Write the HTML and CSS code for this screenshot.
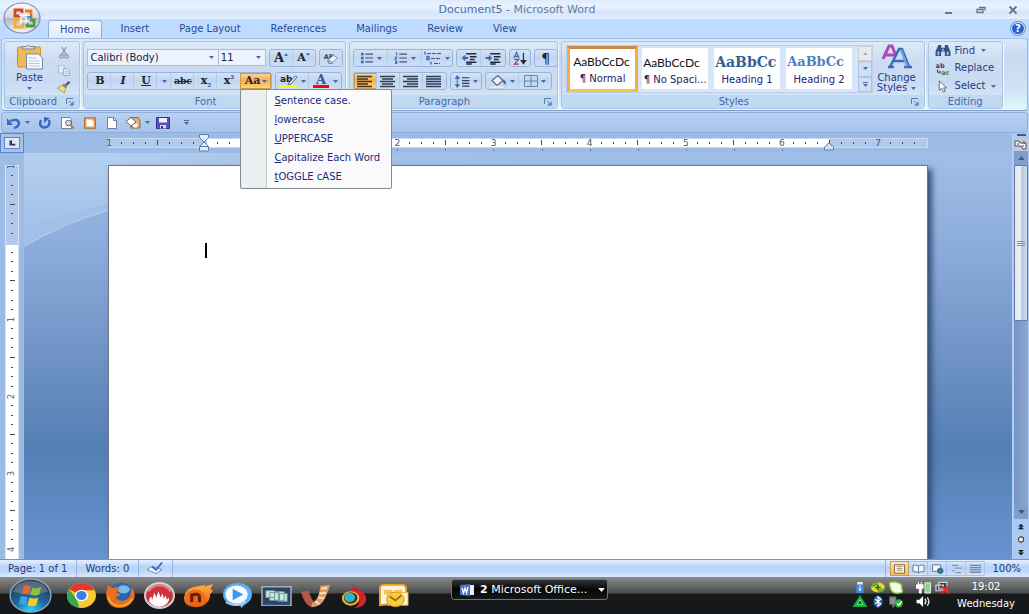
FILE: index.html
```html
<!DOCTYPE html>
<html lang="en">
<head>
<meta charset="utf-8">
<title>Document5 - Microsoft Word</title>
<link rel="stylesheet" href="styles.css">
</head>
<body>
<svg class="defs" aria-hidden="true">
  <defs>
    <radialGradient id="orb" cx=".5" cy=".95" r=".8"><stop offset="0" stop-color="#2fd6ff"/><stop offset=".5" stop-color="#1b6a9c"/><stop offset="1" stop-color="#2b3f55"/></radialGradient>
    <linearGradient id="silver" x1="0" y1="0" x2="0" y2="1"><stop offset="0" stop-color="#fdfdfe"/><stop offset=".48" stop-color="#d5d8e0"/><stop offset=".52" stop-color="#b4b9c8"/><stop offset="1" stop-color="#f4f5f9"/></linearGradient>
    <linearGradient id="swoosh" x1="0" y1="0" x2="0" y2="1"><stop offset="0" stop-color="#b4d0ef"/><stop offset="1" stop-color="#a3c1e8"/></linearGradient>
    <linearGradient id="fade" x1="0" y1="0" x2="1" y2="0"><stop offset="0" stop-color="#b3cfef"/><stop offset="1" stop-color="#a0bfe8" stop-opacity="0"/></linearGradient>
    <linearGradient id="fire" x1="0" y1="0" x2="0" y2="1"><stop offset="0" stop-color="#ffb347"/><stop offset="1" stop-color="#e2560c"/></linearGradient>
    <symbol id="caret" viewBox="0 0 5 3"><path d="M0 0h5L2.500 3z" fill="currentColor"/></symbol>
    <symbol id="launch" viewBox="0 0 8 8"><path d="M.5 6V.5H7M3 3l3.500 3.500M7 3.500V7H3.500" fill="none" stroke="#5b7fb4"/><path d="M7.500 4v3.500H4z" fill="#5b7fb4"/></symbol>
  </defs>
</svg>

<header class="titlebar">
  <button class="office" aria-label="Office Button">
    <svg viewBox="0 0 38 32"><ellipse cx="19" cy="16" rx="18" ry="15" fill="url(#silver)" stroke="#7f8ba3" stroke-width="1.200"/><g fill="none" stroke-width="2.800"><path d="M18 14h-6V8h7v3" stroke="#d9431e"/><path d="M22 9h6v6h-4" stroke="#ef7d1a"/><path d="M18 18h-6v7h8v-4" stroke="#f5b21c"/><path d="M27 18h4v6h-7v-3" stroke="#4f9a3e"/><path d="M22 14h6v4" stroke="#4b86cf" stroke-width="2"/></g><path d="M16 13.500h11M16 19h10M18 11v11M23 11v11" stroke="#fff" stroke-width="1.200"/></svg>
  </button>
  <h1 class="title">Document5 - <span>Microsoft Word</span></h1>
  <div class="winbtns">
    <button aria-label="Minimize"><svg viewBox="0 0 10 10"><path d="M1 7h7v2H1z" fill="#6c7480"/></svg></button>
    <button aria-label="Restore"><svg viewBox="0 0 10 10"><path d="M3 2.500h6v3M1 4.500h6v3H1z" fill="none" stroke="#6c7480" stroke-width="1.300"/></svg></button>
    <button aria-label="Close"><svg viewBox="0 0 10 10"><path d="M1.500 1.500l7 7m0-7l-7 7" stroke="#6c7480" stroke-width="1.800"/></svg></button>
  </div>
</header>

<nav class="tabs">
  <button class="tab active">Home</button><button class="tab">Insert</button><button class="tab">Page Layout</button><button class="tab">References</button><button class="tab">Mailings</button><button class="tab">Review</button><button class="tab">View</button>
  <button class="help" aria-label="Help">?</button>
</nav>

<section class="ribbon">
  <div class="group g-clip">
    <div class="content clip">
      <button class="paste">
        <svg class="i26" viewBox="0 0 26 25"><rect x="1" y="3" width="23" height="20" rx="1.500" fill="#eeb956" stroke="#c98f35"/><path d="M6 5V2.500h4Q12 0 14 2.500h4V5z" fill="#d9dde5" stroke="#7d8798"/><path d="M10 10h12l4 4v11H10z" fill="#f7f9fd" stroke="#7787a5"/><path d="M12 14h8m-8 3h11m-11 2.500h11m-11 2.500h11" stroke="#b9c4d8"/></svg>
        <span>Paste</span><svg class="car"><use href="#caret"/></svg>
      </button>
      <div class="clipcol">
        <button aria-label="Cut"><svg class="i14" viewBox="0 0 14 14"><path d="M4.500 0l5 9M9.500 0l-5 9" stroke="#8c9ab3" stroke-width="1.800" fill="none"/><circle cx="4" cy="11" r="2" fill="none" stroke="#8c9ab3" stroke-width="1.600"/><circle cx="10" cy="11" r="2" fill="none" stroke="#8c9ab3" stroke-width="1.600"/></svg></button>
        <button aria-label="Copy"><svg class="i14" viewBox="0 0 14 14"><path d="M.5 1.500h5l2 2v7h-7z" fill="#e3eaf5" stroke="#a3b3cd"/><path d="M6.500 5.500h5l2 2v6h-7z" fill="#e3eaf5" stroke="#93a5c3"/><path d="M8 9h4m-4 2h4" stroke="#b4c1d8"/></svg></button>
        <button aria-label="Format Painter"><svg class="i14" viewBox="0 0 14 14"><path d="M13.500 1L9 5" stroke="#4c5568" stroke-width="2.600"/><path d="M7 3l4 3.500L9 8.500 5 5z" fill="#7f8492"/><path d="M5 5l4 3.500L7.500 14 -1 8.500z" fill="#f4dc7a" stroke="#9a7f35" stroke-width=".8"/></svg></button>
      </div>
    </div>
    <div class="gl"><span>Clipboard</span><button aria-label="Clipboard options"><svg><use href="#launch"/></svg></button></div>
  </div>

  <div class="group g-font">
    <div class="content rows">
      <div class="row">
        <div class="combos">
          <div class="combo fname"><select aria-label="Font"><option>Calibri (Body)</option></select><svg class="car"><use href="#caret"/></svg></div>
          <div class="combo fsize"><select aria-label="Font size"><option>11</option></select><svg class="car"><use href="#caret"/></svg></div>
        </div>
        <div class="bar"><button class="w23 serif big" aria-label="Grow font">A<svg class="sup up"><use href="#caret"/></svg></button><button class="w22 serif mid" aria-label="Shrink font">A<svg class="sup"><use href="#caret"/></svg></button></div>
        <div class="bar"><button class="w22" aria-label="Clear formatting"><svg class="i16" viewBox="0 0 18 16"><text x="0" y="8" class="t8">AB</text><path d="M5 10l7-6 5 3-6 6-5 0z" fill="#eef2f8" stroke="#7181a0"/><path d="M5 10l5 2 1 2H6z" fill="#b9c6dc" stroke="#7181a0"/></svg></button></div>
      </div>
      <div class="row">
        <div class="bar bold-bar">
          <button class="w23 serif"><b>B</b></button><button class="w23 serif"><b><i>I</i></b></button><button class="w23 serif"><b><u>U</u></b></button><button class="w14" aria-label="Underline style"><svg class="car"><use href="#caret"/></svg></button><button class="w23 serif sm"><s>abc</s></button><button class="w23 serif" aria-label="Subscript"><b class="xs">x<sub>₂</sub></b></button><button class="w23 serif" aria-label="Superscript"><b class="xs">x<sup>²</sup></b></button>
          <div class="menuwrap">
            <button class="on case serif" aria-haspopup="true" aria-expanded="true"><b>Aa</b><svg class="car"><use href="#caret"/></svg></button>
            <ul class="menu">
              <li><button><u>S</u>entence case.</button></li>
              <li><button><u>l</u>owercase</button></li>
              <li><button><u>U</u>PPERCASE</button></li>
              <li><button><u>C</u>apitalize Each Word</button></li>
              <li><button><u>t</u>OGGLE cASE</button></li>
            </ul>
          </div>
        </div>
        <div class="bar"><button class="w34" aria-label="Highlight"><svg class="i18" viewBox="0 0 18 15"><text x="0" y="8" class="t9">ab</text><path d="M9 9l6-7 2 1-6 7-3 1z" fill="#eef1f7" stroke="#5c6a84"/><path d="M0 11h17v3H0z" fill="#ff0"/></svg><svg class="car"><use href="#caret"/></svg></button><button class="w32" aria-label="Font color"><svg class="i18" viewBox="0 0 18 15"><text x="4" y="10" class="ta">A</text><path d="M1 11h16v3H1z" fill="#f00"/></svg><svg class="car"><use href="#caret"/></svg></button></div>
      </div>
    </div>
    <div class="gl"><span>Font</span><button aria-label="Font options"><svg><use href="#launch"/></svg></button></div>
  </div>

  <div class="group g-par">
    <div class="content rows">
      <div class="row">
        <div class="bar">
          <button class="w35" aria-label="Bullets"><svg class="i14" viewBox="0 0 14 14"><path d="M0 1h3v3H0zM0 5.500h3v3H0zM0 10h3v3H0z" fill="#3968b5"/><path d="M5 2.500h9M5 7h9M5 11.500h9" stroke="#48536b" stroke-width="1.400"/></svg><svg class="car"><use href="#caret"/></svg></button><button class="w35" aria-label="Numbering"><svg class="i14" viewBox="0 0 14 14"><path d="M1 1h1v3M0 6h2l-2 2.500h2M0 10.500h2v3H0M0 12h2" fill="none" stroke="#3968b5" stroke-width="1.200"/><path d="M5 2.500h9M5 7h9M5 11.500h9" stroke="#48536b" stroke-width="1.400"/></svg><svg class="car"><use href="#caret"/></svg></button><button class="w30" aria-label="Multilevel list"><svg class="i18" viewBox="0 0 18 14"><path d="M1 0v3M3 5h2v3H3zM7 10v3" fill="none" stroke="#3968b5" stroke-width="1.300"/><path d="M3 2h14M7 7h9M10 12h6" stroke="#48536b" stroke-width="1.200" stroke-dasharray="4 1"/></svg><svg class="car"><use href="#caret"/></svg></button>
        </div>
        <div class="bar">
          <button class="w24" aria-label="Decrease indent"><svg class="i16" viewBox="0 0 16 14"><path d="M5 2h11M9 5h7M9 8h5M5 11h11M5 13h6" stroke="#222b3c" stroke-width="1.600"/><path d="M0 6.500l4-3.500v2.500h3v2H4V10z" fill="#3968b5"/></svg></button><button class="w24" aria-label="Increase indent"><svg class="i16" viewBox="0 0 16 14"><path d="M5 2h11M9 5h7M9 8h5M5 11h11M5 13h6" stroke="#222b3c" stroke-width="1.600"/><path d="M7 6.500L3.500 3v2.500H0v2h3.500V10z" fill="#3968b5"/></svg></button>
        </div>
        <div class="bar"><button class="w20" aria-label="Sort"><svg class="i16" viewBox="0 0 16 15"><path d="M1 7l3-6.500L7 7M2 5h4" fill="none" stroke="#3968b5" stroke-width="1.300"/><path d="M1.500 8.500h5l-5 5.500h5" fill="none" stroke="#a83244" stroke-width="1.300"/><path d="M12 1v11M9.500 10l2.500 3.500 2.500-3.500z" stroke="#20283a" stroke-width="1.300" fill="#20283a"/></svg></button></div>
        <div class="bar"><button class="w22 pil" aria-label="Show marks">¶</button></div>
      </div>
      <div class="row">
        <div class="bar">
          <button class="w23 on" aria-label="Align left"><svg class="i16" viewBox="0 0 16 12"><path d="M0 1h15M0 3.500h11M0 6h15M0 8.500h11M0 11h15" stroke="#3b3428" stroke-width="1.300"/></svg></button><button class="w23" aria-label="Center"><svg class="i16" viewBox="0 0 16 12"><path d="M0 1h15M2 3.500h11M0 6h15M2 8.500h11M0 11h15" stroke="#333d52" stroke-width="1.300"/></svg></button><button class="w23" aria-label="Align right"><svg class="i16" viewBox="0 0 16 12"><path d="M0 1h15M4 3.500h11M0 6h15M4 8.500h11M0 11h15" stroke="#333d52" stroke-width="1.300"/></svg></button><button class="w23" aria-label="Justify"><svg class="i16" viewBox="0 0 16 12"><path d="M0 1h15M0 3.500h15M0 6h15M0 8.500h15M0 11h15" stroke="#333d52" stroke-width="1.300"/></svg></button>
        </div>
        <div class="bar"><button class="w30" aria-label="Line spacing"><svg class="i16" viewBox="0 0 16 14"><path d="M3 0l3 4H0zM3 14l3-4H0z" fill="#3968b5"/><path d="M3 3v8" stroke="#3968b5" stroke-width="1.500" stroke-dasharray="2 1"/><path d="M8 3h8M8 6h8M8 9h8M8 12h8" stroke="#333d52" stroke-width="1.200"/></svg><svg class="car"><use href="#caret"/></svg></button></div>
        <div class="bar"><button class="w34" aria-label="Shading"><svg class="i18" viewBox="0 0 18 14"><path d="M3 6l6-5 5 5-6 5z" fill="#eef3fb" stroke="#55678a" stroke-width="1.200"/><path d="M13 5q4 0 4 5-3 0-3-4z" fill="#3968b5"/><path d="M0 11.500h16v2H0z" fill="#fff" stroke="#a8b3c8" stroke-width=".6"/></svg><svg class="car"><use href="#caret"/></svg></button><button class="w32" aria-label="Borders"><svg class="i14" viewBox="0 0 14 12"><path d="M.5.500h13v11H.5zM7 0v12M0 6h14" fill="none" stroke="#6b83ab"/></svg><svg class="car"><use href="#caret"/></svg></button></div>
      </div>
    </div>
    <div class="gl"><span>Paragraph</span><button aria-label="Paragraph options"><svg><use href="#launch"/></svg></button></div>
  </div>

  <div class="group g-styles">
    <div class="content styles">
      <div class="gallery">
        <button class="style sel"><span class="pv">AaBbCcDc</span><span class="nm">¶ Normal</span></button>
        <button class="style"><span class="pv">AaBbCcDc</span><span class="nm">¶ No Spaci...</span></button>
        <button class="style"><span class="pv h1">AaBbCc</span><span class="nm">Heading 1</span></button>
        <button class="style"><span class="pv h2">AaBbCc</span><span class="nm">Heading 2</span></button>
        <div class="gscroll"><button class="dis" aria-label="Previous styles"><svg class="car up"><use href="#caret"/></svg></button><button aria-label="Next styles"><svg class="car"><use href="#caret"/></svg></button><button class="more" aria-label="More styles"><svg class="car"><use href="#caret"/></svg></button></div>
      </div>
      <button class="change">
        <svg class="i30" viewBox="0 0 30 24"><path d="M1 14L7 1h3l4 10M4 10h8" fill="none" stroke="#b04ab8" stroke-width="3"/><path d="M8 22L17 4h3l7 18M12 16h12M6 22h6M22 22h8" fill="none" stroke="#3f6cb5" stroke-width="2.600"/><path d="M19 5l6 16" stroke="#6fa5e8" stroke-width="2.400"/></svg>
        <span>Change</span><span>Styles <svg class="car"><use href="#caret"/></svg></span>
      </button>
    </div>
    <div class="gl"><span>Styles</span><button aria-label="Styles options"><svg><use href="#launch"/></svg></button></div>
  </div>

  <div class="group g-edit">
    <div class="content editing">
      <button><svg class="i16" viewBox="0 0 16 14"><path d="M3 1h3v3h4V1h3l3 7v5h-6V8H6v5H0V8z" fill="#2f4f85"/><path d="M2 8h2v4H2zM12 8h2v4h-2zM7 5h2v2H7z" fill="#a9c3ea"/></svg><span>Find</span><svg class="car"><use href="#caret"/></svg></button>
      <button><svg class="i16" viewBox="0 0 16 14"><text x="0" y="6" class="t7">ab</text><text x="6" y="14" class="t7 green">ac</text><path d="M2 8v3h3M4 9.500L5.500 11 4 12.500" fill="none" stroke="#333"/></svg><span>Replace</span></button>
      <button><svg class="i16" viewBox="0 0 16 14"><path d="M4 1v10l2.500-2L8.500 13l2-1-2-3.500h3.500z" fill="#fff" stroke="#55617a"/></svg><span>Select</span><svg class="car"><use href="#caret"/></svg></button>
    </div>
    <div class="gl nolaunch"><span>Editing</span></div>
  </div>
</section>

<div class="qat">
  <button aria-label="Undo"><svg class="i14" viewBox="0 0 14 12"><path d="M3 4q8-3 9 2 0 4-5 5" fill="none" stroke="#3a67c4" stroke-width="2.400"/><path d="M0 1v7h6z" fill="#3a67c4"/></svg></button>
  <button class="qc" aria-label="Undo list"><svg class="car"><use href="#caret"/></svg></button>
  <button class="redo" aria-label="Repeat"><svg class="i14" viewBox="0 0 14 12"><path d="M3 3q-3 7 4 7.500Q13 9 11 3" fill="none" stroke="#3a67c4" stroke-width="2.400"/><path d="M6 0v6l6-5z" fill="#3a67c4"/></svg></button>
  <button aria-label="Print preview"><svg class="i14" viewBox="0 0 14 12"><path d="M.5.500h8l2 2v9H.5z" fill="#fff" stroke="#6f7f9c"/><circle cx="7.500" cy="6" r="2.800" fill="#cfe0f6" stroke="#56647e"/><path d="M9.500 8l3.500 3.500" stroke="#c08035" stroke-width="2"/></svg></button>
  <button aria-label="Borders"><svg class="i14" viewBox="0 0 14 12"><rect x="1.500" y=".8" width="11" height="10.500" fill="#e9a357" stroke="#a7743a"/><path d="M3.500 2.500h5l2 2v5h-7z" fill="#fff"/></svg></button>
  <button aria-label="New"><svg class="i14" viewBox="0 0 14 12"><path d="M2.500.500h6l3 3v8h-9z" fill="#fff" stroke="#6f7f9c"/><path d="M8.500.500v3h3" fill="none" stroke="#6f7f9c"/></svg></button>
  <button class="fill" aria-label="Fill"><svg class="i16" viewBox="0 0 16 12"><path d="M5 1h8l2 3v7.500H6z" fill="#e3b067" stroke="#8d6a36"/><path d="M1 5l5-4 5 4.500-5 4z" fill="#fff" stroke="#55678a"/><path d="M8 8l5-1-1 4H9z" fill="#fff"/></svg></button>
  <button class="qc qn" aria-label="Fill list"><svg class="car"><use href="#caret"/></svg></button>
  <button class="save" aria-label="Save"><svg class="i14" viewBox="0 0 14 12"><path d="M.5.500h13v11H.5z" fill="#5a51b8" stroke="#37338a"/><path d="M3 1h8v4.500H3z" fill="#eef0fb"/><path d="M4 8h6v3.500H4z" fill="#d3d6ee"/><path d="M5 9h2v2.500H5z" fill="#37338a"/></svg></button>
  <button aria-label="Customize toolbar" class="more cust"><svg class="car"><use href="#caret"/></svg></button>
</div>

<main class="work">
  <button class="corner" aria-label="Tab selector"><svg viewBox="0 0 16 12"><path d="M5 3h3v4h4v2H5z" fill="#26355c"/></svg></button>
  <div class="hstrip">
    <div class="hruler" id="hr"></div>
  </div>
  <div class="vscroll">
    <span class="split"></span>
    <button class="rtog" aria-label="View ruler"><svg viewBox="0 0 14 12"><path d="M1 2h4l1 2h6v6h-3L7 7H1z" fill="#f7f3f6" stroke="#4d4f63"/><path d="M3 5h2M8 7h2M10 2v3" stroke="#4d4f63"/></svg></button>
    <button class="arr" aria-label="Scroll up"><svg class="arrow up"><use href="#caret"/></svg></button>
    <div class="track"><div class="thumb"><i></i><i></i><i></i></div></div>
    <button class="arr" aria-label="Scroll down"><svg class="arrow"><use href="#caret"/></svg></button>
    <div class="browse">
      <button aria-label="Previous page"><svg viewBox="0 0 8 8"><path d="M0 4l4-3.500L8 4zM0 7.500L4 4l4 3.500z" fill="#111"/></svg></button>
      <button aria-label="Browse object"><svg viewBox="0 0 8 8"><circle cx="4" cy="4" r="3.500" fill="#f2efe6" stroke="#444" stroke-width="1.400"/></svg></button>
      <button aria-label="Next page"><svg viewBox="0 0 8 8"><path d="M0 .5l4 3.500L8 .5zM0 4l4 3.500L8 4z" fill="#111"/></svg></button>
    </div>
  </div>
  <div class="vstrip"><div class="vruler" id="vr"></div></div>
  <div class="desk">
    <svg class="curve" viewBox="0 0 600 94"><path d="M0 0h84v58Q40 70 0 94z" fill="#a1bfe7"/><path d="M0 0h84v51Q40 60 0 75z" fill="url(#swoosh)"/><path d="M84 0h516v20H84z" fill="url(#fade)"/><path d="M0 93Q40 70 84 57" fill="none" stroke="#abc8ed" stroke-width="1.500"/></svg>
    <article class="page"><div class="cursor"></div></article>
  </div>
</main>

<footer class="status">
  <span class="st">Page: 1 of 1</span><span class="st">Words: 0</span>
  <button class="st" aria-label="Proofing"><svg class="i16" viewBox="0 0 16 12"><path d="M0 7l5-3 10 3-6 4z" fill="#f5f8fd" stroke="#7a8db0"/><path d="M5 4l4 3.500L15 0" fill="none" stroke="#3a67c4" stroke-width="1.800"/></svg></button>
  <div class="views">
    <button class="on" aria-label="Print layout"><svg viewBox="0 0 14 10"><path d="M1.500.500h11v9h-11z" fill="#fdf6e6" stroke="#6e5a3a"/><path d="M4 2.500h6M4 4.500h6M4 6.500h6" stroke="#9b8b70"/></svg></button>
    <button aria-label="Full screen reading"><svg viewBox="0 0 14 10"><path d="M1 1q3-1 6 1 3-2 6-1v7q-3-1-6 1-3-2-6-1zM7 2v7" fill="#f3f6fb" stroke="#62718d"/></svg></button>
    <button aria-label="Web layout"><svg viewBox="0 0 14 10"><path d="M1.500.500h9v7h-9z" fill="#f3f6fb" stroke="#62718d"/><circle cx="10" cy="7" r="3" fill="#3e7f62" stroke="#3a67a4"/></svg></button>
    <button aria-label="Outline"><svg viewBox="0 0 14 10"><path d="M2 1h7M5 4h8M2 7h3M6 9h6" stroke="#8a93a4" stroke-width="1.400"/></svg></button>
    <button aria-label="Draft"><svg viewBox="0 0 14 10"><path d="M1 1h12M1 3.500h12M1 6h12M1 8.500h12" stroke="#7a8597" stroke-width="1.400"/></svg></button>
  </div>
  <button class="zoom">100%</button>
</footer>

<div class="taskbar">
  <button class="start" aria-label="Start"><svg viewBox="0 0 44 36"><ellipse cx="22" cy="18" rx="21" ry="17" fill="url(#orb)" stroke="#8ba3b8" stroke-width="1.500"/><path d="M4 14Q8 3 22 3t18 11Q22 20 4 14z" fill="#fff" opacity=".22"/><path d="M15 8q4-1 7 1l-2 8q-4-2-7 0z" fill="#f0652a"/><path d="M24 10q4 2 9-1l-2 8q-5 2-9 0z" fill="#8cc63e"/><path d="M12 19q4-1 7 1l-2 8q-4-2-7-1z" fill="#3fa2e6"/><path d="M21 20q5 2 9 0l-2 8q-4 2-9 0z" fill="#fcc72b"/></svg></button>
  <div class="quick">
    <button aria-label="Chrome"><svg viewBox="0 0 30 26"><ellipse cx="15" cy="13" rx="14" ry="12" fill="#fcc934"/><path d="M15 13L3 7Q7 1 15 1t12.500 7H15z" fill="#dc3a2c"/><path d="M3 7l7 9 3 8.800Q1 23 1 13q0-3 2-6z" fill="#3aa64a"/><ellipse cx="15" cy="13" rx="6.500" ry="5.500" fill="#fff"/><ellipse cx="15" cy="13" rx="5" ry="4.300" fill="#3c7fe0"/></svg></button>
    <button aria-label="Firefox"><svg viewBox="0 0 30 26"><ellipse cx="16" cy="11" rx="12" ry="10" fill="#2b62b4"/><ellipse cx="18" cy="7" rx="6" ry="4" fill="#79b9ea"/><path d="M1 11L3 3l4 3q4-2 7 0l-3 4 4 2q-2 3-5 2 2 5 8 4 6-1 7-8l1-5q5 8 1 13-4 7-13 7Q2 25 1 11z" fill="#e8701c"/><path d="M3 14q3 10 12 9 7 0 12-7" fill="none" stroke="#f9b232" stroke-width="1.500"/></svg></button>
    <button aria-label="Nero"><svg viewBox="0 0 30 26"><ellipse cx="15" cy="13" rx="14" ry="12" fill="#cf333a" stroke="#cfd2d4" stroke-width="2"/><path d="M5 19q0-4 2-5l1 3 2-7 2 5 2-6 2 6 2-4 1 5 2-3 1 4 2-2q1 3-1 5-4 4-8 4-6 0-10-5z" fill="#fbfbfb"/><path d="M4 9Q8 3 15 3t11 6" stroke="#ed8a8c" stroke-width="2" fill="none"/></svg></button>
    <button aria-label="Nimbuzz"><svg viewBox="0 0 32 26"><path d="M1 15Q2 6 12 4q8-1 11-2l-1 2 9-3-3 6 3 0q-1 3-3 5 0 5-3 8-4 5-11 5Q1 25 1 15z" fill="url(#fire)"/><ellipse cx="13" cy="15" rx="10" ry="8" fill="#ee6a13"/><path d="M9 20v-9M9 13q7-3 8 1v6" fill="none" stroke="#64200a" stroke-width="3.200"/></svg></button>
    <button aria-label="Media player"><svg viewBox="0 0 32 28"><ellipse cx="16" cy="13" rx="15" ry="12" fill="#5daef2"/><path d="M20 27l-2-5 8-2z" fill="#83c5f7"/><ellipse cx="15" cy="13" rx="11.500" ry="9.500" fill="#f4faff"/><path d="M11 7l11 6-11 6z" fill="#3c96e9"/><path d="M4 21q10 6 20-1" stroke="#a6d5fa" stroke-width="2" fill="none"/></svg></button>
    <button aria-label="Switch windows"><svg viewBox="0 0 32 26"><path d="M1 4h30v19H1z" fill="#2b4560" stroke="#a3b0be" stroke-width="1.500"/><path d="M5 8h9v7H5zM9 10h10v8H9zM14 9h10v9H14zM18 11h9v8h-9z" fill="#cfe6e2" stroke="#6d9aa0"/><path d="M2 21h28v2H2z" fill="#294f8f"/></svg></button>
    <button aria-label="Video converter"><svg viewBox="0 0 32 26"><path d="M1 9l8-1q2 8 6 12l-3 5Q4 22 1 9z" fill="#b05a45"/><path d="M12 25q-1-4 3-6 5-4 6-16l10-1q-3 11-7 17-4 6-12 6z" fill="#dd9a63"/><path d="M22 6l6-1M20 11l7-1M19 15l6 1M16 19l4 3" stroke="#fbe3c3" stroke-width="2"/></svg></button>
    <button aria-label="Dragon"><svg viewBox="0 0 28 28"><path d="M12 0q0 5 7 8 8 4 7 11-2 8-13 8 6-2 6-8T9 9q5-1 3-9z" fill="#d3232d"/><ellipse cx="10" cy="17" rx="9" ry="7.500" fill="#f4bc22"/><ellipse cx="10" cy="16.500" rx="7" ry="6" fill="#38333f"/><ellipse cx="9" cy="16" rx="5.500" ry="4.800" fill="#2eb6c4"/></svg></button>
    <button aria-label="Outlook"><svg viewBox="0 0 32 26"><path d="M2 23V5q0-3 4-3h19q4 0 4 4v14z" fill="#fff5dc" stroke="#ef9a24" stroke-width="2"/><path d="M6 7h9v5H6zM17 7h8v5h-8z" fill="#f6bf66"/><path d="M10 10h21v13H10z" fill="#fdf3d8" stroke="#e8b040"/><ellipse cx="18" cy="17" rx="9" ry="7.500" fill="#f7cf3c" stroke="#d99617"/><path d="M12 14l6 4 6-5" fill="none" stroke="#9a6a10" stroke-width="1.800"/></svg></button>
  </div>
  <button class="task"><svg class="i14" viewBox="0 0 14 12"><path d="M0 1l10-1v12L0 11z" fill="#4c6fc9"/><path d="M10 1h4v10h-4z" fill="#e8edf8"/><path d="M2 4l1.500 5L5 4l1.500 5L8 3" fill="none" stroke="#fff" stroke-width="1.300"/></svg><span><b>2</b> Microsoft Office...</span><svg class="tcar"><use href="#caret"/></svg></button>
  <div class="tray">
    <svg viewBox="0 0 16 14"><path d="M5 1h6v3H5z" fill="#dfe8f5"/><path d="M4 4h8v9H4z" fill="#3f8be4"/><path d="M8 5v6M6.500 8.500L8 10l1.500-1.500" stroke="#fff" fill="none"/></svg>
    <svg viewBox="0 0 16 14"><ellipse cx="8" cy="7" rx="7.500" ry="5.500" fill="#e9d92c"/><path d="M0 7q1-5.500 8-5.500 2 3-8 5.500zM16 7q-1 5.500-8 5.500-2-3 8-5.500z" fill="#58b13b"/><path d="M8 4v6M5 7h6" stroke="#166b22" stroke-width="1.800"/></svg>
    <svg viewBox="0 0 16 14"><path d="M1 2q5-2 9 0 5 1 4 6 3 5-3 5-8 1-9-6-1-2-1-5z" fill="#f3fde6" stroke="#8fd04b" stroke-width="1.500"/></svg>
    <svg class="gapl" viewBox="0 0 16 14"><path d="M2 1v3M5 1v3M0 4h7v4H5v5H3V8H0z" fill="#fff" stroke="#fff"/><path d="M9 2h6v11H9z" fill="#8fd28b" stroke="#e8efe8"/></svg>
    <svg viewBox="0 0 16 14"><path d="M4.500 1.500h9v7h-9zM1.500 4.500h8v6h-8z" fill="#3d434b" stroke="#d2d6da" stroke-width="1.300"/><path d="M8 6l7 7m0-7l-7 7" stroke="#f0261c" stroke-width="2.400"/></svg>
    <svg viewBox="0 0 16 14"><path d="M8 0l8 13H0z" fill="#16b33c"/><path d="M8 5l3 5H5z" fill="#063c14" stroke="#8df0a0"/></svg>
    <svg viewBox="0 0 16 14"><ellipse cx="8" cy="7" rx="5" ry="6.500" fill="#1d62b4"/><path d="M5 4.500l6 5-3 2.500V2l3 2.500-6 5" fill="none" stroke="#fff" stroke-width="1.300"/></svg>
    <svg viewBox="0 0 16 14"><path d="M1 2h7v8H6v3H4v-3H1z" fill="#87909a" stroke="#555"/><circle cx="11" cy="9" r="4.500" fill="#2fae3c"/><path d="M9 9l2 2 3-4" fill="none" stroke="#fff" stroke-width="1.400"/></svg>
    <svg class="gapl" viewBox="0 0 16 14"><path d="M0 5h3l4-4v12L3 9H0z" fill="#fff"/><path d="M9 4q2 3 0 6M11.500 2.500q3.500 4.500 0 9" fill="none" stroke="#d9e4ea" stroke-width="1.500"/></svg>
  </div>
  <div class="clock"><span>19:02</span><span>Wednesday</span></div>
</div>
<script src="rulers.js"></script>
</body>
</html>
```

FILE: rulers.js
```js
// Eighth-inch marks: a number each inch, a tick each half inch, dots between.
function fillRuler(el, count, zero) {
  for (let i = 0; i <= count; i++) {
    const m = document.createElement('span');
    const inch = Math.abs(i / 8 - zero);
    if (i === count) m.className = 'mark';
    else if (i % 8 === 0) {
      m.className = 'mark num';
      if (inch > 0) m.textContent = inch;
    } else m.className = i % 4 === 0 ? 'mark tick' : 'mark dot';
    if (i % 4 === 0 && i > zero * 8 && i < 60) m.classList.add('stop');
    el.appendChild(m);
  }
}
const hr = document.getElementById('hr');
const vr = document.getElementById('vr');
const inchHeight = 77;
const marks = Math.ceil((vr.parentElement.clientHeight - 12) / inchHeight * 8);
vr.style.height = Math.round(marks * inchHeight / 8) + 'px';
fillRuler(hr, 68, 1);
fillRuler(vr, marks, 1);
hr.insertAdjacentHTML('beforeend',
  '<svg class="indent left" viewBox="0 0 10 18"><path d="M.5.500h9v3L5 8 .5 3.500zM5 8l4.500 4.500v4.500h-9v-4.500zM.5 12.500h9" fill="#e4ebf6" stroke="#5f7cae"/></svg>' +
  '<svg class="indent right" viewBox="0 0 10 18"><path d="M5 9l4.500 4v3h-9v-3z" fill="#d5e1f3" stroke="#5f7cae"/></svg>');
```

FILE: styles.css
```css
* { box-sizing: border-box; }
html, body { height: 100%; }
body {
  margin: 0;
  display: flex;
  flex-direction: column;
  overflow: hidden;
  font: 10px/12px "DejaVu Sans", sans-serif;
  color: #1f3c82;
  background: #bdd8fb;
}
button, select { font: inherit; color: inherit; border: 0; background: none; padding: 0; margin: 0; }
button { display: flex; align-items: center; justify-content: center; }
svg { display: block; flex: none; overflow: visible; }
.defs { position: absolute; width: 0; height: 0; }
.car { width: 5px; height: 3px; color: #4a6ba8; }
.up { transform: rotate(180deg); }
.i14 { width: 14px; height: 12px; }
.i16 { width: 16px; height: 13px; }
.i18 { width: 18px; height: 15px; }
.i26 { width: 27px; height: 25px; }
.i30 { width: 30px; height: 24px; }
.t7 { font: bold 7px "DejaVu Sans", sans-serif; fill: #39435a; }
.t8 { font: bold 8px "DejaVu Sans", sans-serif; fill: #39435a; }
.t9 { font: bold 9px "DejaVu Sans", sans-serif; fill: #222; }
.ta { font: bold 13px "DejaVu Serif", serif; fill: #35558f; }
.green { fill: #2c8a35; }

/* Title bar */
.titlebar {
  flex: 0 0 19px;
  display: flex;
  align-items: center;
  position: relative;
  background: linear-gradient(#dcecfe, #eaf3fe 30%, #d6e6fb 70%, #e3f0fe);
}
.office { position: absolute; left: 3px; top: 2px; z-index: 3; }
.office svg { width: 38px; height: 32px; }
.title { flex: 1; margin: 0; text-align: center; font-size: 11px; font-weight: normal; color: #4b6fa8; padding-left: 90px; }
.title span { color: #64789c; }
.winbtns { display: flex; gap: 22px; padding-right: 11px; }
.winbtns svg { width: 10px; height: 10px; }

/* Tabs */
.tabs { flex: 0 0 19px; display: flex; gap: 8px; padding: 1px 4px 0 48px; background: #bfdbff; color: #2a4b94; }
.tab { padding: 0 11px; }
.tab.active { background: linear-gradient(#f3f8fe, #dfeafa); border: 1px solid #8fb2e2; border-bottom: 0; border-radius: 3px 3px 0 0; }
.help {
  margin: 2px 0 0 auto; width: 14px; height: 13px; border-radius: 50%;
  border: 1px solid #dbe6f6; outline: 1px solid #7d93b8;
  background: #2763cf; color: #fff; font-weight: bold;
}

/* Ribbon */
.ribbon {
  flex: 0 0 71px;
  display: flex;
  gap: 3px;
  margin: 0 1px;
  padding: 2px 24px 1px 2px;
  border: 1px solid #9ebfea;
  border-bottom: 1px solid #7f9fca;
  border-radius: 4px;
  background: linear-gradient(#dbe8f8, #c8daf1 25%, #d0e1f5 70%, #e2f7fe);
}
.group {
  min-width: 0;
  display: flex;
  flex-direction: column;
  border: 1px solid #a9c5e8;
  border-radius: 3px;
  background: linear-gradient(#dde9f7, #cbdcf1 30%, #c9dbf2 60%, #dcebfa);
  box-shadow: 1px 1px 0 #eef6fe;
}
.g-clip { flex: 75 1 0; }
.g-font { flex: 262 1 0; }
.g-par { flex: 209 1 0; }
.g-styles { flex: 364 1 0; }
.g-edit { flex: 74 1 0; }
.content { flex: 1; display: flex; min-height: 0; }
.gl { flex: 0 0 13px; display: flex; align-items: center; background: #c1d8f1; color: #4169ae; border-radius: 0 0 3px 3px; }
.gl span { flex: 1; text-align: center; }
.gl button { width: 18px; }
.gl button svg { width: 8px; height: 8px; }
.clip { padding: 2px 8px 0 11px; justify-content: space-between; }
.paste { flex-direction: column; justify-content: flex-start; gap: 3px; }
.clipcol { display: flex; flex-direction: column; justify-content: space-around; }
.rows { flex-direction: column; padding: 7px 2px 5px 3px; gap: 5px; }
.row { display: flex; gap: 3px; }
.bar { display: flex; height: 18px; border: 1px solid #98b4dc; border-radius: 3px; background: linear-gradient(#d3e3f7, #c0d5f0 50%, #cde0f6); }
.bar button { height: 16px; gap: 3px; color: #1c2333; }
.bar > button + button { box-shadow: -1px 0 0 #b4cae8; }
.w14 { width: 14px; } .w20 { width: 20px; } .w22 { width: 22px; } .w23 { width: 23px; } .w24 { width: 24px; }
.w30 { width: 30px; } .w32 { width: 32px; } .w34 { width: 33px; } .w35 { width: 34px; }
.combos { display: flex; width: 181px; height: 17px; border: 1px solid #a7c0e2; background: #edf3fc; }
.combo { display: flex; align-items: center; padding-right: 4px; }
.combo select { appearance: none; flex: 1; min-width: 0; padding: 0 2px; outline: 0; color: #14224a; }
.fname { flex: 3; border-right: 1px solid #a7c0e2; }
.fsize { flex: 1; }
.serif { font-family: "DejaVu Serif", serif; font-size: 11px; }
.bar .big { font-size: 13px; font-weight: bold; gap: 0; }
.bar .mid { font-size: 11px; font-weight: bold; gap: 0; }
.sup { width: 4px; height: 3px; margin-bottom: 8px; color: #2b5cae; }
.serif.sm { font-size: 9px; font-weight: bold; }
.xs { font-size: 11px; line-height: 12px; }
.xs sub, .xs sup { font-size: 9px; line-height: 0; color: #2b5cae; }
.xs sup { vertical-align: 2px; }
.pil { font-size: 14px; }
.bar .on { background: linear-gradient(#fbd9a0, #f8b04a 45%, #fdd67c); box-shadow: inset 0 0 0 1px #c79a53; }
.menuwrap { position: relative; }
.bar .case { width: 31px; gap: 2px; }
.menu {
  position: absolute; z-index: 10; left: 0; top: 100%;
  width: 152px; margin: 0; padding: 1px 0 2px; list-style: none;
  border: 1px solid #868a91; border-radius: 2px;
  background: linear-gradient(90deg, #e9eeee 25px, #c8cccc 25px, #c8cccc 26px, #fafafa 26px);
}
.menu button { width: 100%; height: 19px; padding-left: 33px; justify-content: flex-start; gap: 0; color: #232a7c; }

.styles { padding: 3px 5px 2px 4px; justify-content: space-between; }
.gallery { display: flex; gap: 3px; border: 1px solid #bad0ec; background: #d7e6f8; }
.style { width: 66px; margin: 2px 0 3px 3px; padding: 3px 1px; flex-direction: column; justify-content: flex-end; gap: 4px; overflow: hidden; background: #fff; }
.style.sel { width: 71px; margin: 0; padding: 3px 3px 4px; border: 3px solid #f2ac48; border-top-color: #c98a45; border-bottom-color: #fbc73a; }
.style + .style.sel, .style.sel + .style { margin-left: 1px; }
.pv { width: 100%; overflow: hidden; white-space: nowrap; text-align: left; font: 12px/14px Lato, sans-serif; color: #111; }
.style .nm { white-space: nowrap; color: #22226e; }
.pv.h1 { font: bold 14px/16px "DejaVu Serif", serif; color: #355f96; }
.pv.h2 { font: bold 13px/16px "DejaVu Serif", serif; color: #4f81bd; }
.gscroll { display: flex; flex-direction: column; width: 14px; margin-left: 3px; }
.gscroll button { flex: 1; border: 1px solid #a9c3e6; background: #cfe0f6; }
.gscroll .dis { background: #e8eaee; border-color: #ccd2dc; }
.gscroll .dis .car { color: #a6adb9; }
.more { flex-direction: column; gap: 1px; }
.more::before { content: ""; width: 5px; height: 1px; background: #4a6ba8; }
.change { flex-direction: column; justify-content: flex-start; width: 44px; line-height: 10px; }
.change svg.i30 { margin-bottom: 4px; }
.change span { display: flex; align-items: center; gap: 4px; }
.editing { flex-direction: column; justify-content: space-around; padding: 0 0 0 6px; }
.editing button { justify-content: flex-start; gap: 4px; }
.editing .car { margin-left: 2px; }

/* Quick access toolbar */
.qat {
  flex: 0 0 21px; display: flex; align-items: center; margin: 1px 1px 0; padding: 0 5px;
  border: 1px solid #8fafdc; border-radius: 3px; background: linear-gradient(#b9d1f0, #a6c3ea);
}
.qat button { width: 22px; height: 18px; }
.qat button:first-child { width: 14px; }
.qat .qc { width: 12px; }
.qat .redo { width: 24px; }
.qat .fill { width: 20px; }
.qat .qn { width: 8px; }
.qat .save { width: 24px; }

/* Work area */
.work { flex: 1; min-height: 0; display: grid; grid-template: 20px 1fr / 24px 1fr 17px; background: #9dbce5; }
.corner { border: 1px solid #5d83cf; background: #a6c2ea; }
.corner svg { width: 16px; height: 12px; border: 1px solid #5d83cf; background: #dfe8f6; }
.hstrip { display: flex; justify-content: center; align-items: center; padding-bottom: 1px; }
.hruler {
  position: relative; width: 83%; height: 10px; display: flex; justify-content: space-between; align-items: center;
  border: 1px solid #c7daf3; font-size: 9px; color: #4b5566;
  background: linear-gradient(90deg, #b1caec 12%, #fff 12%, #fff 88%, #b1caec 88%);
}
.mark { position: relative; display: flex; justify-content: center; align-items: center; flex: 0 0 0; }
.mark.dot::before { content: ""; flex: none; width: 1px; height: 2px; background: #3f4a5c; }
.mark.tick::before { content: ""; flex: none; width: 1px; height: 5px; background: #3f4a5c; }
.hruler .mark { width: 0; height: 8px; }
.hruler .stop::after { content: ""; position: absolute; top: 10px; left: 0; width: 1px; height: 2px; background: #6a7c99; }
.indent { position: absolute; width: 10px; height: 18px; top: -5px; }
.indent.left { left: 11%; }
.indent.right { left: 88%; margin-left: -5px; }
.vscroll { grid-row: 1 / 3; grid-column: 3; display: flex; flex-direction: column; align-items: center; border-left: 1px solid #b4d2fa; background: #aac9f4; }
.split { width: 9px; height: 2px; margin: 1px 0 2px; background: #47557a; }
.rtog { width: 16px; height: 13px; background: #c5cad8; }
.rtog svg { width: 14px; height: 12px; }
.arr { width: 14px; height: 14px; background: #809ecb; }
.arrow { width: 9px; height: 4px; color: #47557a; }
.track { flex: 1; width: 14px; background: linear-gradient(90deg, #7894c3, #8ba8d2); }
.thumb { height: 46%; border: 1px solid #667b9f; border-radius: 1px; background: linear-gradient(90deg, #e2e8f2, #eef2f7 40%, #b7c9e0 60%, #d0dceb); display: flex; flex-direction: column; align-items: center; justify-content: center; gap: 1px; }
.thumb i { width: 8px; height: 1px; background: #8b9097; }
.browse { display: flex; flex-direction: column; padding-top: 1px; }
.browse button { width: 15px; height: 13px; }
.browse svg { width: 6px; height: 7px; }
.vstrip { overflow: hidden; padding: 12px 5px 0; }
.vruler {
  display: flex; flex-direction: column; justify-content: space-between;
  border: 1px solid #d4e2f5; background: linear-gradient(#b1caec 79px, #fff 79px);
  font-size: 8px; color: #4b5566;
}
.vruler .mark { height: 0; }
.vruler .mark.tick::before { width: 5px; height: 1px; }
.vruler .mark.dot::before { width: 2px; height: 1px; }
.vruler .num { writing-mode: vertical-rl; transform: rotate(180deg); align-items: center; }
.desk {
  position: relative; overflow: hidden; display: flex; justify-content: center; padding-top: 12px;
  background: linear-gradient(#a0bfe8, #8aaada 25%, #6f93c5 50%, #547fb4 73%, #6793d2);
}
.curve { position: absolute; left: 0; top: 0; width: 600px; height: 94px; }
.page { position: relative; width: 83%; background: #fff; border: 1px solid #6d7787; border-bottom: 0; box-shadow: 4px 4px 6px #344f77; padding: 77px 0 0 96px; }
.cursor { width: 2px; height: 15px; background: #000; }

/* Status bar */
.status { flex: 0 0 18px; display: flex; align-items: stretch; padding-right: 8px; border-top: 1px solid #6f92c7; background: linear-gradient(#e6f0fe, #b9d3f8 40%, #c0d8f9 70%, #dbeafd); color: #23397a; }
.st { display: flex; align-items: center; padding: 0 9px 0 8px; border-right: 1px solid #98b8e4; }
.views { margin-left: auto; display: flex; align-items: center; padding-left: 4px; border-left: 1px solid #98b8e4; }
.views button { width: 19px; height: 15px; border: 1px solid #a8c3ea; border-left: 0; }
.views .on { background: linear-gradient(#fde3ae, #f9bf62); border: 1px solid #c59b58; }
.views svg { width: 13px; height: 10px; }
.zoom { margin-left: 7px; }

/* Taskbar */
.taskbar { flex: 0 0 37px; display: flex; padding-right: 14px; background: linear-gradient(#8b8b8b, #4c4d4d 43%, #17191a 46%, #15181a); color: #fff; }
.start { padding-left: 9px; }
.start svg { width: 43px; height: 35px; }
.quick { display: flex; padding-left: 10px; }
.quick button { width: 39px; }
.quick svg { width: 31px; height: 27px; }
.task { margin: 2px 0 0 38px; width: 157px; height: 21px; padding: 0 2px 0 8px; gap: 6px; justify-content: flex-start; border: 1px solid #6f7173; border-radius: 3px; background: linear-gradient(#303234, #050606 50%, #151718); font-size: 11px; }
.task span { flex: 1; text-align: left; white-space: nowrap; }
.tcar { width: 7px; height: 4px; }
.tray { margin-left: auto; display: grid; grid-template-columns: repeat(3, 18px) 28px 18px; grid-auto-rows: 14px; align-content: center; justify-items: center; padding-bottom: 1px; }
.tray svg { width: 16px; height: 13px; }
.tray .gapl { justify-self: end; margin-right: 1px; }
.clock { display: flex; flex-direction: column; align-items: center; padding: 4px 0 0 6px; gap: 5px; }
```
